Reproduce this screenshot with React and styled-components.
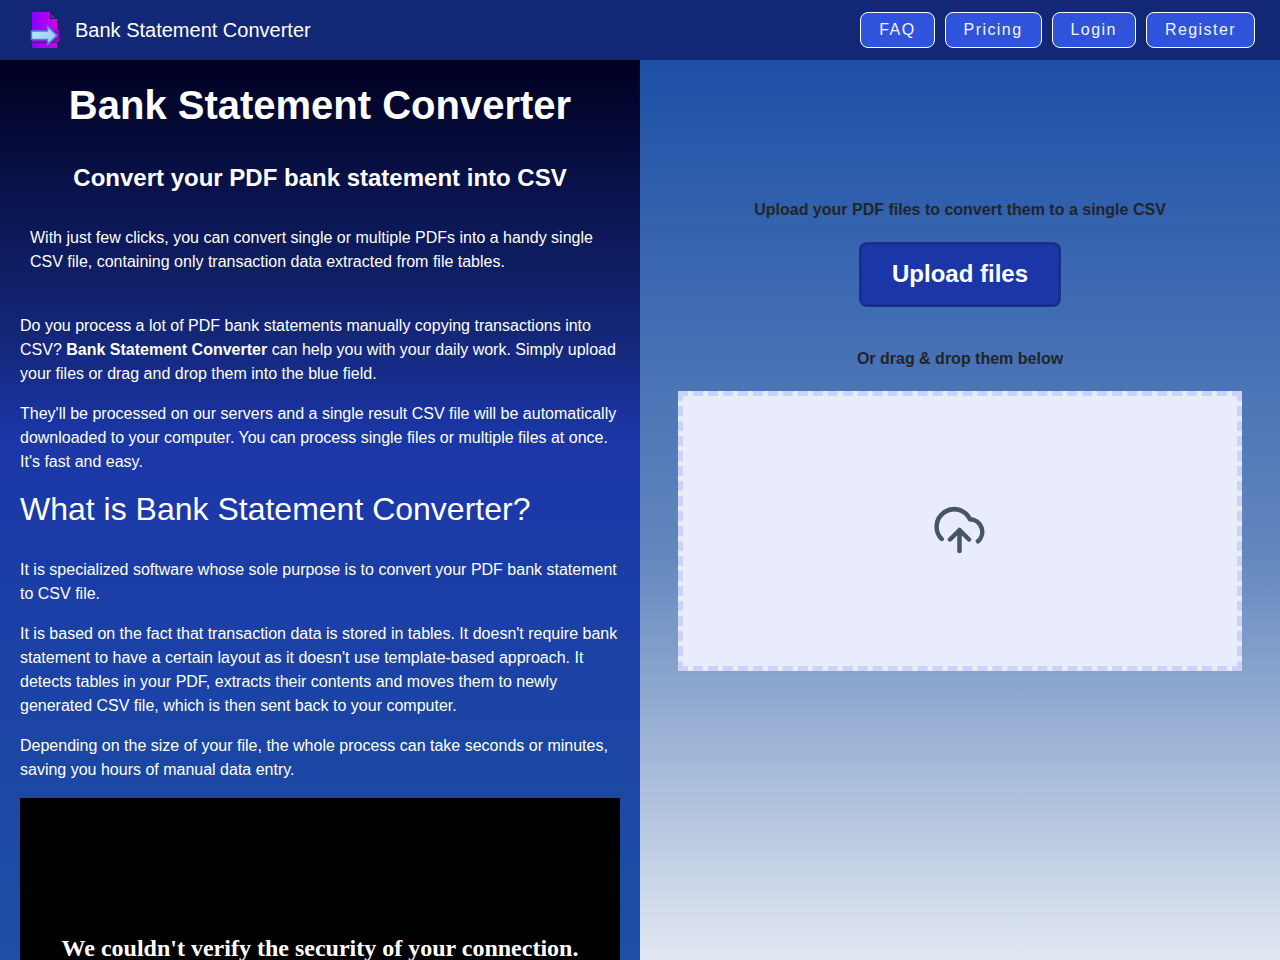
import React from "react";
import styled, { createGlobalStyle } from "styled-components";

const links = ["FAQ", "Pricing", "Login", "Register"];

const Logo = () => (
  <svg width="30" height="38" viewBox="0 0 30 38" aria-hidden="true">
    <defs>
      <linearGradient id="sheet" x1="0" y1="0" x2="1" y2="0">
        <stop offset="0" stopColor="#8a00ff" />
        <stop offset="1" stopColor="#d200e6" />
      </linearGradient>
      <linearGradient id="arrow" x1="0" y1="0" x2="1" y2="0">
        <stop offset="0" stopColor="#b4e4ff" />
        <stop offset="1" stopColor="#a8c4fa" />
      </linearGradient>
    </defs>
    <path d="M2 1h18v7h7v29H2z" fill="url(#sheet)" />
    <path d="M20.500 1.500v6h6z" fill="#7a10c8" stroke="#26106a" />
    <path d="M2 19h27v12H2z" fill="#a000d8" />
    <path d="M2 31.500h25" stroke="#55109c" />
    <path
      d="M1.500 20h16v-5l9.500 9.500-9.500 9v-5h-16z"
      fill="url(#arrow)"
      stroke="#3c82dc"
      strokeWidth="1.500"
    />
  </svg>
);

const CloudUpload = () => (
  <svg width="56" height="56" viewBox="0 0 56 56" aria-hidden="true">
    <path
      d="M9.700 36A17.500 17.500 0 1 1 38 16.300A12.600 12.600 0 0 1 46 38.300M27.500 48V27M18 36.500l9.500-9.500 9.500 9.500"
      fill="none"
      stroke="#475569"
      strokeWidth="4.500"
      strokeLinecap="round"
      strokeLinejoin="round"
    />
  </svg>
);

const App = () => {
  return (
    <>
      <GlobalStyle />
      <Header>
        <Brand href="#home">
          <Logo />
          <span>Bank Statement Converter</span>
        </Brand>
        <Nav>
          {links.map((link) => (
            <NavLink key={link} href={`#${link.toLowerCase()}`}>
              {link}
            </NavLink>
          ))}
        </Nav>
      </Header>
      <Main>
        <About>
          <Title>Bank Statement Converter</Title>
          <Subtitle>Convert your PDF bank statement into CSV</Subtitle>
          <Lead>
            With just few clicks, you can convert single or multiple PDFs into a
            handy single CSV file, containing only transaction data extracted
            from file tables.
          </Lead>
          <Text>
            Do you process a lot of PDF bank statements manually copying
            transactions into CSV? <strong>Bank Statement Converter</strong> can
            help you with your daily work. Simply upload your files or drag and
            drop them into the blue field.
          </Text>
          <Text>
            They'll be processed on our servers and a single result CSV file
            will be automatically downloaded to your computer. You can process
            single files or multiple files at once. It's fast and easy.
          </Text>
          <Question>What is Bank Statement Converter?</Question>
          <Text>
            It is specialized software whose sole purpose is to convert your PDF
            bank statement to CSV file.
          </Text>
          <Text>
            It is based on the fact that transaction data is stored in tables.
            It doesn't require bank statement to have a certain layout as it
            doesn't use template-based approach. It detects tables in your PDF,
            extracts their contents and moves them to newly generated CSV file,
            which is then sent back to your computer.
          </Text>
          <Text>
            Depending on the size of your file, the whole process can take
            seconds or minutes, saving you hours of manual data entry.
          </Text>
          <Video>
            <VideoMessage>
              We couldn't verify the security of your connection.
            </VideoMessage>
          </Video>
        </About>
        <Upload>
          <Hint>Upload your PDF files to convert them to a single CSV</Hint>
          <UploadButton type="button">Upload files</UploadButton>
          <Hint>Or drag &amp; drop them below</Hint>
          <DropZone>
            <CloudUpload />
          </DropZone>
        </Upload>
      </Main>
    </>
  );
};

const GlobalStyle = createGlobalStyle`
  * {
    box-sizing: border-box;
  }

  body {
    margin: 0;
    font-family: "Liberation Sans", Arial, sans-serif;
    font-size: 16px;
    line-height: 24px;
    color: #212529;
  }

  #root {
    display: flex;
    flex-direction: column;
    height: 100vh;
  }
`;

const Header = styled.header`
  display: flex;
  flex-shrink: 0;
  align-items: center;
  justify-content: space-between;
  height: 60px;
  padding: 0 25px 0 30px;
  background: #132777;
`;

const Brand = styled.a`
  display: flex;
  align-items: center;
  gap: 15px;
  color: #fff;
  font-size: 20px;
  text-decoration: none;
`;

const Nav = styled.nav`
  display: flex;
  gap: 10px;
`;

const NavLink = styled.a`
  padding: 5px 18px;
  border: 1px solid #fff;
  border-radius: 8px;
  background: #3053dc;
  color: #f1f5f9;
  letter-spacing: 0.09em;
  text-decoration: none;
`;

const Main = styled.main`
  display: grid;
  flex: 1;
  grid-template-columns: 1fr 1fr;
  min-height: 0;
`;

const About = styled.section`
  padding: 20px;
  overflow-y: auto;
  scrollbar-width: none;
  background: linear-gradient(#000020, #14277a 31%, #1b36a8 42%, #1c50a4);
  color: #fff;
`;

const Title = styled.h1`
  margin: 0 0 32px;
  font-size: 40px;
  line-height: 50px;
  text-align: center;
`;

const Subtitle = styled.h2`
  margin: 0 0 32px;
  font-size: 24px;
  line-height: 32px;
  text-align: center;
`;

const Text = styled.p`
  margin: 0 0 16px;
`;

const Lead = styled.p`
  margin: 0 0 40px;
  padding: 0 10px;
`;

const Question = styled.h2`
  margin: 0 0 30px;
  font-size: 32px;
  font-weight: 400;
  line-height: 38px;
`;

const Video = styled.div`
  display: flex;
  flex-direction: column;
  align-items: center;
  min-height: 340px;
  padding: 136px 16px;
  background: #000;
`;

const VideoMessage = styled.h2`
  margin: 0;
  font-family: "Liberation Serif", serif;
  font-size: 24px;
  line-height: 28px;
  text-align: center;
`;

const Upload = styled.section`
  display: flex;
  flex-direction: column;
  align-items: center;
  padding: 138px 38px;
  background: linear-gradient(#1c50a6, #6387be 55%, #e2e8f2);
`;

const Hint = styled.p`
  margin: 0 0 20px;
  font-weight: 700;
`;

const UploadButton = styled.button`
  margin-bottom: 40px;
  padding: 14px 30px 15px;
  border: 3px solid #182f8f;
  border-radius: 8px;
  background: #1b36a6;
  color: #fff;
  font-family: inherit;
  font-size: 24px;
  font-weight: 700;
  line-height: 30px;
`;

const DropZone = styled.div`
  display: flex;
  align-items: center;
  justify-content: center;
  width: 100%;
  height: 280px;
  border: 5px dashed #cdd3f7;
  background: #e8ecfb;
`;

export default App;
